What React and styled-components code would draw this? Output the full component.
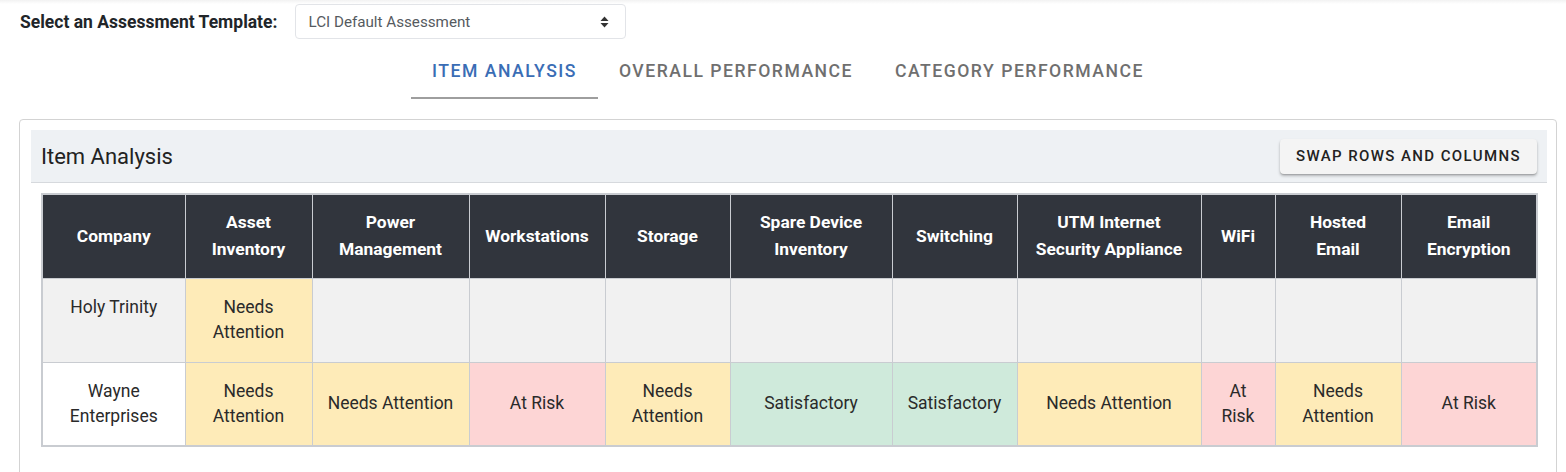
import React from "react";
import styled, { createGlobalStyle } from "styled-components";

const GlobalStyle = createGlobalStyle`
  body {
    margin: 0;
    background: #ffffff;
    font-family: Roboto, "Liberation Sans", sans-serif;
    color: #212529;
  }
`;

const columns = [
  { label: "Company", width: 143 },
  { label: "Asset Inventory", width: 127 },
  { label: "Power Management", width: 157 },
  { label: "Workstations", width: 136 },
  { label: "Storage", width: 125 },
  { label: "Spare Device Inventory", width: 162 },
  { label: "Switching", width: 125 },
  { label: "UTM Internet Security Appliance", width: 184 },
  { label: "WiFi", width: 74 },
  { label: "Hosted Email", width: 126 },
  { label: "Email Encryption", width: 136 },
];

const rows = [
  {
    company: "Holy Trinity",
    tone: "empty",
    align: "top",
    cells: ["Needs Attention", "", "", "", "", "", "", "", "", ""],
  },
  {
    company: "Wayne Enterprises",
    tone: "plain",
    align: "middle",
    cells: [
      "Needs Attention",
      "Needs Attention",
      "At Risk",
      "Needs Attention",
      "Satisfactory",
      "Satisfactory",
      "Needs Attention",
      "At Risk",
      "Needs Attention",
      "At Risk",
    ],
  },
];

const statusColor = {
  "Needs Attention": "#feebb8",
  "At Risk": "#fdd5d5",
  Satisfactory: "#cfeadb",
};

const SortIcon = () => (
  <svg width="9" height="12" viewBox="0 0 9 12">
    <path d="M4.5 0.5 L8.5 5 H0.5 Z" fill="#333" />
    <path d="M4.5 11.5 L8.5 7 H0.5 Z" fill="#333" />
  </svg>
);

const App = () => {
  return (
    <Page>
      <GlobalStyle />
      <TopShade />
      <TemplateRow>
        <TemplateLabel>Select an Assessment Template:</TemplateLabel>
        <Select>
          <span>LCI Default Assessment</span>
          <SortIcon />
        </Select>
      </TemplateRow>
      <Tabs>
        <Tab active>Item Analysis</Tab>
        <Tab>Overall Performance</Tab>
        <Tab>Category Performance</Tab>
      </Tabs>
      <Card>
        <CardHeader>
          <CardTitle>Item Analysis</CardTitle>
          <SwapButton>Swap Rows and Columns</SwapButton>
        </CardHeader>
        <CardBody>
          <Table>
            <colgroup>
              {columns.map((c) => (
                <col key={c.label} style={{ width: c.width }} />
              ))}
            </colgroup>
            <thead>
              <tr>
                {columns.map((c) => (
                  <Th key={c.label}>{c.label}</Th>
                ))}
              </tr>
            </thead>
            <tbody>
              {rows.map((r) => (
                <tr key={r.company}>
                  <Td $bg={r.tone === "empty" ? "#f1f1f1" : "#ffffff"} $align={r.align}>
                    {r.company}
                  </Td>
                  {r.cells.map((v, i) => (
                    <Td key={i} $bg={statusColor[v] || "#f1f1f1"} $align={r.align}>
                      {v}
                    </Td>
                  ))}
                </tr>
              ))}
            </tbody>
          </Table>
        </CardBody>
      </Card>
    </Page>
  );
};

export default App;

const Page = styled.div`
  width: 1566px;
  height: 472px;
  overflow: hidden;
  position: relative;
`;

const TopShade = styled.div`
  position: absolute;
  top: 0;
  left: 0;
  right: 0;
  height: 4px;
  background: linear-gradient(#f2f2f2, rgba(255, 255, 255, 0));
`;

const TemplateRow = styled.div`
  display: flex;
  align-items: center;
  padding: 4px 0 0 20px;
  gap: 18px;
`;

const TemplateLabel = styled.label`
  font-size: 17.5px;
  font-weight: 700;
  color: #212529;
`;

const Select = styled.div`
  width: 331px;
  height: 35px;
  box-sizing: border-box;
  border: 1px solid #e2e4e8;
  border-radius: 4px;
  display: flex;
  align-items: center;
  justify-content: space-between;
  padding: 0 16px 0 12px;
  font-size: 15.2px;
  color: #555a60;
`;

const Tabs = styled.div`
  display: flex;
  justify-content: center;
  margin-top: 5px;
  padding-left: 10px;
`;

const Tab = styled.div`
  height: 55px;
  box-sizing: border-box;
  padding: 0 21px;
  display: flex;
  align-items: center;
  font-size: 17.6px;
  font-weight: 500;
  letter-spacing: 1.5px;
  text-transform: uppercase;
  color: ${(p) => (p.active ? "#3a6db5" : "#6f6f6f")};
  border-bottom: 2px solid ${(p) => (p.active ? "#9e9e9e" : "transparent")};
`;

const Card = styled.div`
  margin: 20px 9px 0 19px;
  border: 1px solid #d3d3d3;
  border-radius: 4px;
  padding: 10px 9px 10px 11px;
  height: 400px;
`;

const CardHeader = styled.div`
  background: #eef1f4;
  height: 52px;
  border-bottom: 1px solid #d6d9dd;
  display: flex;
  align-items: center;
  justify-content: space-between;
  padding: 0 10px;
`;

const CardTitle = styled.div`
  font-size: 22px;
  font-weight: 400;
  color: #222;
`;

const SwapButton = styled.button`
  height: 35px;
  width: 257px;
  border: none;
  border-radius: 4px;
  background: #f4f4f4;
  box-shadow: 0 2px 3px rgba(0, 0, 0, 0.25), 0 1px 1px rgba(0, 0, 0, 0.12);
  font-family: Roboto, "Liberation Sans", sans-serif;
  font-size: 15px;
  font-weight: 500;
  letter-spacing: 1.4px;
  text-transform: uppercase;
  color: #222;
`;

const CardBody = styled.div`
  padding: 10px 10px 0;
`;

const Table = styled.table`
  border-collapse: collapse;
  table-layout: fixed;
  width: 1495px;
  border: 2px solid #c9ccd1;
`;

const Th = styled.th`
  background: #31353d;
  color: #ffffff;
  font-size: 17.4px;
  font-weight: 700;
  line-height: 27px;
  height: 84px;
  padding: 0 12px;
  text-align: center;
  border: 1px solid #c9ccd1;
  box-sizing: border-box;
`;

const Td = styled.td`
  background: ${(p) => p.$bg};
  font-size: 17.5px;
  line-height: 25px;
  height: 84px;
  padding: 16px 12px;
  text-align: center;
  border: 1px solid #c9ccd1;
  color: #2a2a2a;
  box-sizing: border-box;
  vertical-align: ${(p) => p.$align};
`;
